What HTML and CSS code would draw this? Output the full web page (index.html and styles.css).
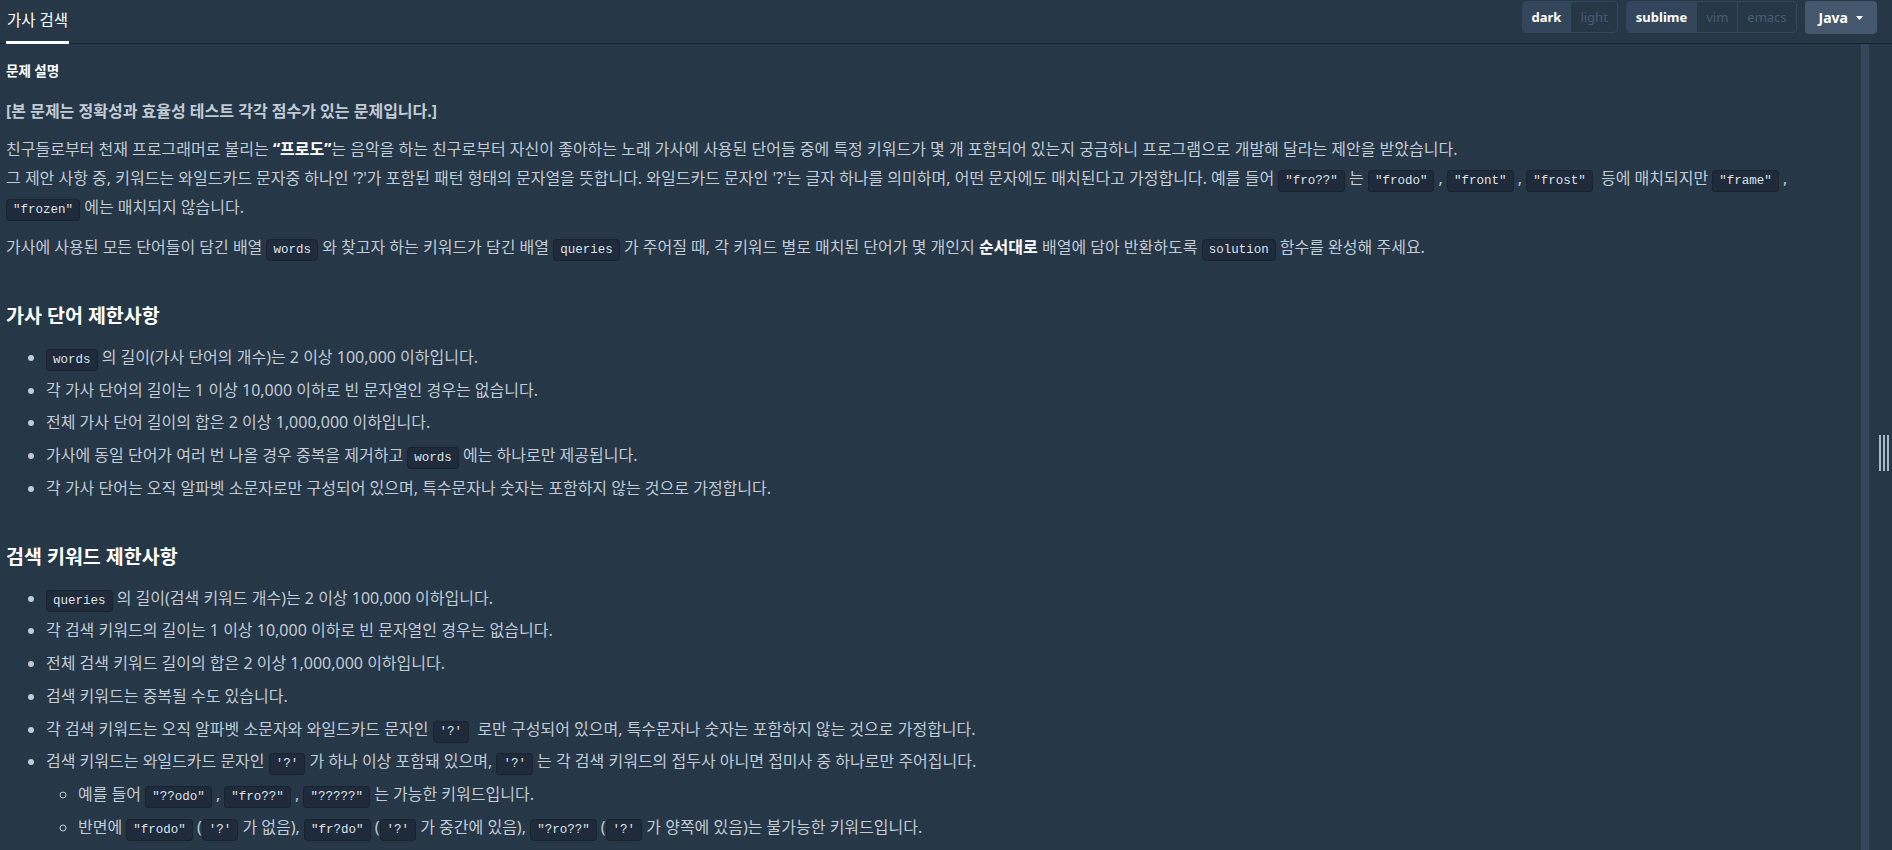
FILE: index.html
```html
<!DOCTYPE html>
<html lang="ko">

<head>
  <meta charset="UTF-8">
  <meta name="viewport" content="width=device-width, initial-scale=1.0">
  <title>가사 검색</title>
  <link rel="stylesheet" href="styles.css">
</head>

<body>
  <header class="topbar">
    <div class="tab">가사 검색</div>
    <div class="controls">
      <div class="toggle">
        <span class="opt active">dark</span>
        <span class="opt">light</span>
      </div>
      <div class="toggle">
        <span class="opt active">sublime</span>
        <span class="opt">vim</span>
        <span class="opt">emacs</span>
      </div>
      <button class="lang">Java
        <svg width="7" height="4" viewBox="0 0 7 4"><polygon points="0,0 7,0 3.5,4" fill="#fff"/></svg>
      </button>
    </div>
  </header>

  <main class="workspace">
    <section class="panel">
      <h5 class="guide-title">문제 설명</h5>
      <p class="notice">[본 문제는 정확성과 효율성 테스트 각각 점수가 있는 문제입니다.]</p>
      <p class="intro">친구들로부터 천재 프로그래머로 불리는 <strong>“프로도”</strong>는 음악을 하는 친구로부터 자신이 좋아하는 노래 가사에 사용된 단어들 중에 특정 키워드가 몇 개 포함되어 있는지 궁금하니 프로그램으로 개발해 달라는 제안을 받았습니다.<br>
        그 제안 사항 중, 키워드는 와일드카드 문자중 하나인 '?'가 포함된 패턴 형태의 문자열을 뜻합니다. 와일드카드 문자인 '?'는 글자 하나를 의미하며, 어떤 문자에도 매치된다고 가정합니다. 예를 들어 <code>"fro??"</code> 는 <code>"frodo"</code> , <code>"front"</code> , <code>"frost"</code>&nbsp; 등에 매치되지만 <code>"frame"</code> ,<br>
        <code>"frozen"</code> 에는 매치되지 않습니다.</p>
      <p>가사에 사용된 모든 단어들이 담긴 배열 <code>words</code> 와 찾고자 하는 키워드가 담긴 배열 <code>queries</code> 가 주어질 때, 각 키워드 별로 매치된 단어가 몇 개인지 <strong>순서대로</strong> 배열에 담아 반환하도록 <code>solution</code> 함수를 완성해 주세요.</p>

      <h3>가사 단어 제한사항</h3>
      <ul>
        <li><code>words</code> 의 길이(가사 단어의 개수)는 2 이상 100,000 이하입니다.</li>
        <li>각 가사 단어의 길이는 1 이상 10,000 이하로 빈 문자열인 경우는 없습니다.</li>
        <li>전체 가사 단어 길이의 합은 2 이상 1,000,000 이하입니다.</li>
        <li>가사에 동일 단어가 여러 번 나올 경우 중복을 제거하고 <code>words</code> 에는 하나로만 제공됩니다.</li>
        <li>각 가사 단어는 오직 알파벳 소문자로만 구성되어 있으며, 특수문자나 숫자는 포함하지 않는 것으로 가정합니다.</li>
      </ul>

      <h3>검색 키워드 제한사항</h3>
      <ul>
        <li><code>queries</code> 의 길이(검색 키워드 개수)는 2 이상 100,000 이하입니다.</li>
        <li>각 검색 키워드의 길이는 1 이상 10,000 이하로 빈 문자열인 경우는 없습니다.</li>
        <li>전체 검색 키워드 길이의 합은 2 이상 1,000,000 이하입니다.</li>
        <li>검색 키워드는 중복될 수도 있습니다.</li>
        <li>각 검색 키워드는 오직 알파벳 소문자와 와일드카드 문자인 <code>'?'</code>&nbsp; 로만 구성되어 있으며, 특수문자나 숫자는 포함하지 않는 것으로 가정합니다.</li>
        <li>검색 키워드는 와일드카드 문자인 <code>'?'</code> 가 하나 이상 포함돼 있으며, <code>'?'</code> 는 각 검색 키워드의 접두사 아니면 접미사 중 하나로만 주어집니다.
          <ul>
            <li>예를 들어 <code>"??odo"</code> , <code>"fro??"</code> , <code>"?????"</code> 는 가능한 키워드입니다.</li>
            <li>반면에 <code>"frodo"</code> (<code>'?'</code> 가 없음), <code>"fr?do"</code> (<code>'?'</code> 가 중간에 있음), <code>"?ro??"</code> (<code>'?'</code> 가 양쪽에 있음)는 불가능한 키워드입니다.</li>
          </ul>
        </li>
      </ul>
    </section>
    <div class="track"></div>
    <div class="gutter">
      <span class="handle"><i></i><i></i><i></i></span>
    </div>
  </main>
</body>

</html>
```

FILE: styles.css
```css
/* problem page, dark theme */

body {
  margin: 0;
  height: 100vh;
  display: flex;
  flex-direction: column;
  overflow: hidden;
  background-color: #263747;
  color: #c1cbd5;
  font-family: "Noto Sans", "Noto Sans CJK KR", sans-serif;
}

.topbar {
  flex-shrink: 0;
  height: 44px;
  box-sizing: border-box;
  display: flex;
  justify-content: space-between;
  align-items: flex-start;
  padding: 0 15px 0 6px;
  border-bottom: 1px solid #172334;
}

.tab {
  height: 44px;
  box-sizing: border-box;
  margin-bottom: -1px;
  padding: 8px 1px 0;
  font-size: 15.5px;
  line-height: 24px;
  color: #fff;
  border-bottom: 3px solid #fff;
}

.controls {
  display: flex;
  gap: 8px;
  margin-top: 1px;
}

.toggle {
  display: flex;
  height: 32px;
  box-sizing: border-box;
  border: 1px solid #34465b;
  border-radius: 4px;
  overflow: hidden;
}

.opt {
  padding: 0 9px;
  font-size: 13px;
  line-height: 30px;
  color: #4b5c70;
}

.opt + .opt {
  border-left: 1px solid #34465b;
}

.opt.active {
  background-color: #34465b;
  color: #fff;
  font-weight: 700;
}

.lang {
  height: 33px;
  display: flex;
  align-items: center;
  gap: 8px;
  padding: 0 14px;
  border: 0;
  border-radius: 4px;
  background-color: #44576c;
  color: #fff;
  font: 700 14px "Noto Sans", sans-serif;
}

.workspace {
  flex: 1;
  min-height: 0;
  display: flex;
}

.panel {
  flex: 1;
  overflow: hidden;
  padding: 17px 6px 0;
}

.track {
  width: 8px;
  background-color: #35465a;
}

.gutter {
  width: 23px;
  box-sizing: border-box;
  display: flex;
  align-items: center;
  justify-content: flex-end;
  padding-right: 3px;
}

.handle {
  display: flex;
  gap: 2px;
  height: 36px;
  margin-top: 12px;
}

.handle i {
  width: 2px;
  background-color: #a9b8c6;
}

.guide-title {
  margin: 0 0 16px;
  font-size: 13.5px;
  line-height: 20px;
  font-weight: 700;
  color: #fff;
}

.panel p {
  margin: 0 0 11px;
  font-size: 16px;
  line-height: 29px;
}

.panel p.notice {
  margin-bottom: 9px;
  font-weight: 700;
}

.panel strong {
  color: #fff;
}

.panel h3 {
  margin: 40px 0 13px;
  font-size: 19.5px;
  line-height: 28px;
  font-weight: 700;
  color: #fff;
}

.panel ul {
  margin: 0;
  padding-left: 40px;
}

.panel ul ul {
  margin-top: 3.7px;
  padding-left: 32px;
  list-style: circle;
}

.panel li {
  margin-bottom: 3.7px;
  font-size: 16px;
  line-height: 29px;
}

.panel li li:last-child {
  margin-bottom: 0;
}

.panel code {
  padding: 3px 6px;
  font-family: "Liberation Mono", "DejaVu Sans Mono", monospace;
  font-size: 12.5px;
  line-height: 1;
  color: #dde4eb;
  background-color: #1f2a3b;
  border: 1px solid #19232f;
  border-radius: 4px;
}
```
